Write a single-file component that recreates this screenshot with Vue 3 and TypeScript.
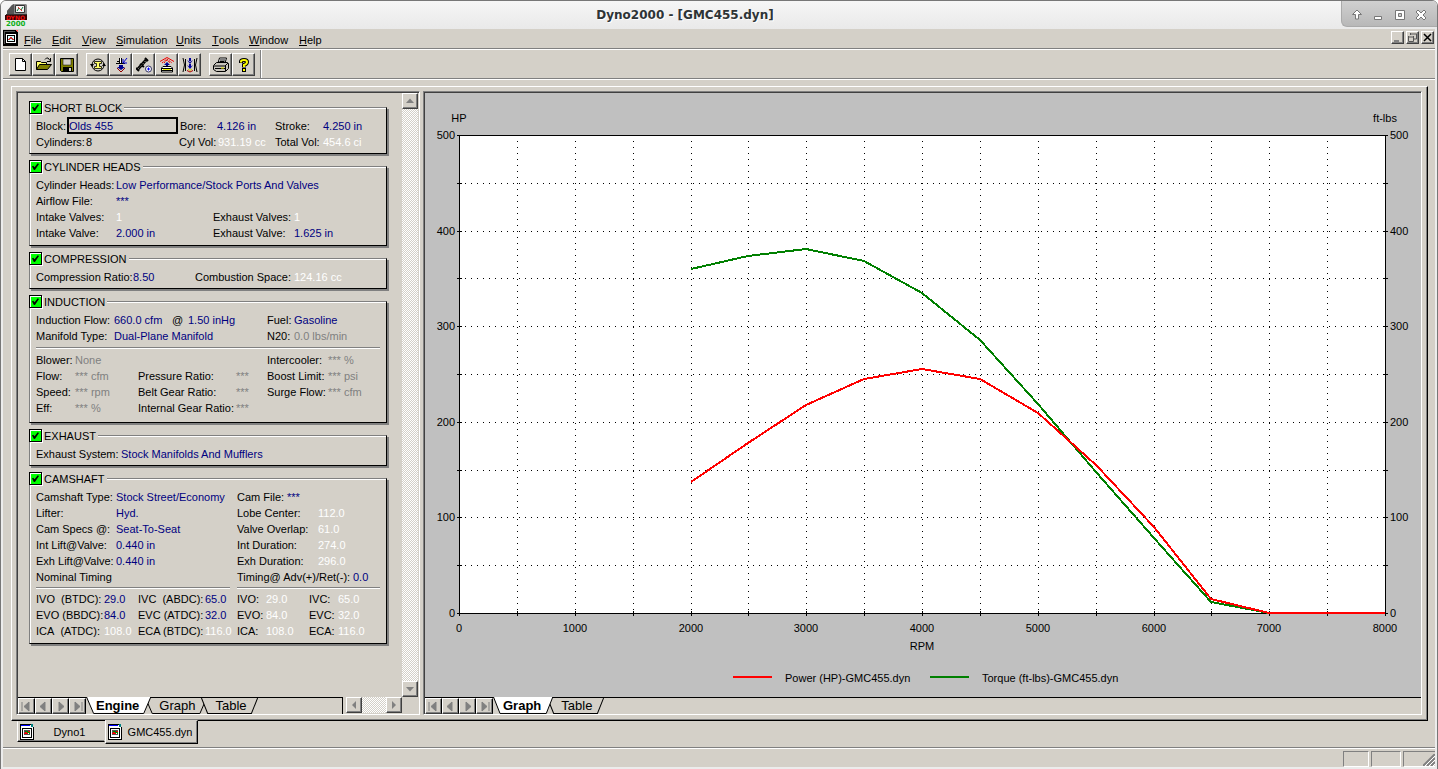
<script setup lang="ts">
import { computed, onBeforeUnmount, onMounted, ref } from 'vue'

type Tone = 'label' | 'edit' | 'calc' | 'off'
type Cell = [string, Tone?]
interface Row { grid: string; cells: Cell[] }
interface Group { id: string; title: string; blocks: Row[][]; split?: boolean; on: boolean }

const menus = ['File', 'Edit', 'View', 'Simulation', 'Units', 'Tools', 'Window', 'Help']

const groups = ref<Group[]>([
  {
    id: 'heads', title: 'CYLINDER HEADS', on: true,
    blocks: [[
      { grid: 'heads', cells: [['Cylinder Heads:'], ['Low Performance/Stock Ports And Valves', 'edit']] },
      { grid: 'heads', cells: [['Airflow File:'], ['***', 'edit']] },
      { grid: 'heads', cells: [['Intake Valves:'], ['1', 'calc'], ['Exhaust Valves:'], ['1', 'calc']] },
      { grid: 'heads', cells: [['Intake Valve:'], ['2.000 in', 'edit'], ['Exhaust Valve:'], ['1.625 in', 'edit']] },
    ]],
  },
  {
    id: 'compression', title: 'COMPRESSION', on: true,
    blocks: [[
      { grid: 'compression', cells: [['Compression Ratio:'], ['8.50', 'edit'], ['Combustion Space:'], ['124.16 cc', 'calc']] },
    ]],
  },
  {
    id: 'induction', title: 'INDUCTION', on: true,
    blocks: [
      [
        { grid: 'flow', cells: [['Induction Flow:'], ['660.0 cfm', 'edit'], ['@'], ['1.50 inHg', 'edit'], ['Fuel:'], ['Gasoline', 'edit']] },
        { grid: 'manifold', cells: [['Manifold Type:'], ['Dual-Plane Manifold', 'edit'], ['N20:'], ['0.0 lbs/min', 'off']] },
      ],
      [
        { grid: 'blower', cells: [['Blower:'], ['None', 'off'], [''], [''], ['Intercooler:'], ['*** %', 'off']] },
        { grid: 'blower', cells: [['Flow:'], ['*** cfm', 'off'], ['Pressure Ratio:'], ['***', 'off'], ['Boost Limit:'], ['*** psi', 'off']] },
        { grid: 'blower', cells: [['Speed:'], ['*** rpm', 'off'], ['Belt Gear Ratio:'], ['***', 'off'], ['Surge Flow:'], ['*** cfm', 'off']] },
        { grid: 'blower', cells: [['Eff:'], ['*** %', 'off'], ['Internal Gear Ratio:'], ['***', 'off']] },
      ],
    ],
  },
  {
    id: 'exhaust', title: 'EXHAUST', on: true,
    blocks: [[
      { grid: 'exhaust', cells: [['Exhaust System:'], ['Stock Manifolds And Mufflers', 'edit']] },
    ]],
  },
  {
    id: 'camshaft', title: 'CAMSHAFT', on: true, split: true,
    blocks: [
      [
        { grid: 'camfile', cells: [['Camshaft Type:'], ['Stock Street/Economy', 'edit'], ['Cam File:'], ['***', 'edit']] },
        { grid: 'cam', cells: [['Lifter:'], ['Hyd.', 'edit'], ['Lobe Center:'], ['112.0', 'calc']] },
        { grid: 'cam', cells: [['Cam Specs @:'], ['Seat-To-Seat', 'edit'], ['Valve Overlap:'], ['61.0', 'calc']] },
        { grid: 'cam', cells: [['Int Lift@Valve:'], ['0.440 in', 'edit'], ['Int Duration:'], ['274.0', 'calc']] },
        { grid: 'cam', cells: [['Exh Lift@Valve:'], ['0.440 in', 'edit'], ['Exh Duration:'], ['296.0', 'calc']] },
        { grid: 'advance', cells: [['Nominal Timing'], ['Timing@ Adv(+)/Ret(-):'], ['0.0', 'edit']] },
      ],
      [
        { grid: 'timing', cells: [['IVO\u00a0 (BTDC):'], ['29.0', 'edit'], ['IVC\u00a0 (ABDC):'], ['65.0', 'edit'], ['IVO:'], ['29.0', 'calc'], ['IVC:'], ['65.0', 'calc']] },
        { grid: 'timing', cells: [['EVO (BBDC):'], ['84.0', 'edit'], ['EVC (ATDC):'], ['32.0', 'edit'], ['EVO:'], ['84.0', 'calc'], ['EVC:'], ['32.0', 'calc']] },
        { grid: 'timing', cells: [['ICA\u00a0 (ATDC):'], ['108.0', 'calc'], ['ECA (BTDC):'], ['116.0', 'calc'], ['ICA:'], ['108.0', 'calc'], ['ECA:'], ['116.0', 'calc']] },
      ],
    ],
  },
])
const shortBlockOn = ref(true)
const block = ref('Olds 455')

const leftTabs = ['Engine', 'Graph', 'Table']
const rightTabs = ['Graph', 'Table']
const leftTab = ref('Engine')
const rightTab = ref('Graph')
const navs = ['First', 'Previous', 'Next', 'Last']
const navPaths = [
  'M3 3v9M10 3v9l-5-4.500z', 'M9 3v9l-5-4.500z', 'M6 3v9l5-4.500z', 'M5 3v9l5-4.500zM12 3v9',
]

/* chart */
const host = ref<HTMLElement | null>(null)
const size = ref({ w: 996, h: 604 })
let watcher: ResizeObserver | undefined
onMounted(() => {
  watcher = new ResizeObserver((entries) => {
    const box = entries[0].contentRect
    size.value = { w: Math.round(box.width), h: Math.round(box.height) }
  })
  if (host.value) watcher.observe(host.value)
})
onBeforeUnmount(() => watcher?.disconnect())

const area = computed(() => ({ l: 34, t: 42, r: size.value.w - 36, b: size.value.h - 84 }))
const px = (rpm: number) => Math.round(area.value.l + ((area.value.r - area.value.l) * rpm) / 8000)
const py = (v: number) => Math.round(area.value.b - ((area.value.b - area.value.t) * v) / 500)
const mid = computed(() => px(4000))
const rpmSteps = Array.from({ length: 17 }, (_, i) => i * 500)
const valueSteps = Array.from({ length: 11 }, (_, i) => i * 50)
const series = [
  { name: 'Torque (ft-lbs)-GMC455.dyn', color: '#008000', at: 8,
    data: [360, 373, 381, 368, 335, 286, 219, 148, 78, 12, 0] },
  { name: 'Power (HP)-GMC455.dyn', color: '#ff0000', at: -189,
    data: [137, 178, 218, 245, 255, 245, 209, 155, 90, 15, 0, 0, 0] },
]
const line = (data: number[]) => data.map((v, i) => `${px(2000 + i * 500)},${py(v)}`).join(' ')
</script>

<template>
  <div class="window">
    <header class="title">
      <svg class="app-icon" viewBox="0 0 24 24" aria-hidden="true">
        <path d="m2 8 5-6 3-1h11l1 1v10H2z" fill="#8a8a8a" />
        <path d="m2 8 5-6 2-1v10H2z" fill="#555" />
        <path d="M10.500 2.500h9v7h-9z" fill="#f4f4f4" stroke="#333" />
        <path d="m12 8 2-3 2 2 2-3" fill="none" stroke="#087a35" />
        <path d="m13 4 4 4" stroke="#e33" />
        <path d="M1 11h21v3H1z" fill="#333" />
        <path d="M0 12h22v5H0z" fill="#300" />
        <text x="1" y="17" class="logo-red">DYNO</text>
        <text x="1" y="23" class="logo-green">2000</text>
      </svg>
      <h1>Dyno2000 - [GMC455.dyn]</h1>
      <div class="wm">
        <button type="button" aria-label="Shade"><svg viewBox="0 0 14 14"><path d="m7 2 4.500 4.500H8.500V11h-3V6.500h-3z" /></svg></button>
        <button type="button" aria-label="Minimize"><svg viewBox="0 0 14 14"><path d="M3.500 8.500h7v3h-7z" /></svg></button>
        <button type="button" aria-label="Maximize"><svg viewBox="0 0 14 14"><path d="M2.500 2.500h9v9h-9z" /><path d="M5.500 5.500h3v3h-3z" fill="#ccc" /></svg></button>
        <button type="button" aria-label="Close"><svg viewBox="0 0 14 14"><path d="m2 4 2-2 3 3 3-3 2 2-3 3 3 3-2 2-3-3-3 3-2-2 3-3z" /></svg></button>
      </div>
    </header>

    <nav class="menubar">
      <svg class="doc-icon" viewBox="0 0 16 16" shape-rendering="crispEdges" aria-hidden="true">
        <path d="M0 0h15v16H0z" fill="#000" /><path d="M1 1h11v1H2v12H1z" fill="#555" />
        <path d="M3 4h10v9H3z" fill="#fff" /><path d="M4 5h8v7H4z" fill="#000" />
        <path d="M5 6h6v5H5z" fill="#dff" /><path d="M5 9.500h1v-1h1v-1h1v1h1v1h2" stroke="#c33" fill="none" />
        <path d="M12 0h3v3z" fill="#f66" />
      </svg>
      <button v-for="m in menus" :key="m" type="button" :class="'menu-' + m.toLowerCase()"><u>{{ m[0] }}</u>{{ m.slice(1) }}</button>
      <div class="mdi">
        <button type="button" aria-label="Minimize document"><svg viewBox="0 0 11 11"><path d="M2 9h5" stroke="#808080" stroke-width="2" /></svg></button>
        <button type="button" aria-label="Restore document"><svg viewBox="0 0 11 11"><path d="M3.500 1v2M3 2h7M9.500 2v5H7M1 5h6M1.500 4v5.500h5V4" fill="none" stroke="#555" /></svg></button>
        <button type="button" aria-label="Close document"><svg viewBox="0 0 11 11"><path d="m2 2 7 7M9 2 2 9" stroke="#000" stroke-width="1.500" /></svg></button>
      </div>
    </nav>

    <div class="toolbar">
      <div class="tools">
        <button type="button" aria-label="New"><svg viewBox="0 0 16 16"><path d="M2.500 1.500h7l3 3v9h-10z" fill="#fff" stroke="#000" /><path d="M9.500 1.500v3h3" fill="none" stroke="#000" /></svg></button>
        <button type="button" aria-label="Open"><svg viewBox="0 0 16 16">
          <path d="M.5 12.500v-8h4l1 1h5v3" fill="#ffff66" stroke="#000" /><path d="m.5 12.500 3-5h12l-4 5z" fill="#808000" stroke="#000" />
          <path d="M9 2.500 10.500 1H12l2 2.500M14.500 1v3.500H11" fill="none" stroke="#000" /></svg></button>
        <button type="button" aria-label="Save"><svg viewBox="0 0 16 16">
          <path d="M1.500 1.500h13v13h-12l-1-1z" fill="#808000" stroke="#000" /><path d="M4 2h8v6H4z" fill="#d4d0c8" stroke="#000" stroke-width=".5" />
          <path d="M4 10h9v4.500H4z" /><path d="M10 11h2v3h-2z" fill="#d4d0c8" /></svg></button>
      </div>
      <div class="tools">
        <button type="button" aria-label="Short block"><svg viewBox="0 0 16 16">
          <circle cx="8" cy="8" r="6" fill="none" stroke="#000" stroke-width="1" /><path d="M4.500 4.500h7v2h-2v3h2v2h-7v-2h2v-3h-2z" fill="#ffff66" stroke="#000" stroke-width=".8" />
          <path d="M0 7h4L2 10zM12 9h4l-2-3z" /></svg></button>
        <button type="button" aria-label="Induction"><svg viewBox="0 0 16 16">
          <path d="M6.500 1v5M8.500 1v5M3 6.500h9M4 4.500h3" fill="none" stroke="#000" /><path d="M7 1h1v5H7z" fill="#fff" /><path d="m14 1-4 5M10 2v4h4" fill="none" stroke="#00c" />
          <path d="M6 8h4v2h2l-4 3-4-3h2z" fill="#000090" /><path d="m4 11 4 4 4-4" fill="none" stroke="#900000" /></svg></button>
        <button type="button" aria-label="Camshaft"><svg viewBox="0 0 16 16">
          <path d="m2 12 8-9" stroke="#000" stroke-width="3" /><path d="m0 11 3 3M4 7l4 3M9 1l3 3" stroke="#000" stroke-width="2" /><path d="m2.500 11.500 7.500-8" stroke="#ddc" stroke-dasharray="1 2" />
          <circle cx="12.500" cy="12" r="3" fill="#fff" stroke="#336" /><path d="M11 12h3M12.500 10.500v3" stroke="#00f" /></svg></button>
        <button type="button" aria-label="Cylinder heads"><svg viewBox="0 0 16 16">
          <path d="m1 4.500 7-4 7 4" fill="none" stroke="#e00" /><path d="m3 6 5-4 5 4M5 6l3-3 3 3" fill="none" stroke="#e00" stroke-dasharray="2 1" />
          <path d="M7 10V8H5l3-3 3 3H9v2z" fill="#000090" /><path d="M2.500 11 4 9.500h8l1.500 1.500v4h-11z" fill="#fff" stroke="#000" /><path d="M3 11.500h10M3 13.500h10" stroke="#000" /><path d="M4 12.500h8" stroke="#ee0" /></svg></button>
        <button type="button" aria-label="Exhaust"><svg viewBox="0 0 16 16">
          <path d="M1 1q3 7 0 14M15 1q-3 7 0 14M3.500 2v12M12.500 2v12" fill="none" stroke="#000" /><path d="M8 1v3M8 7v3" stroke="#0000a0" stroke-width="2" />
          <path d="m5 3 3 2 3-2-3 4zM5 8l3 2 3-2-3 4z" fill="#0000a0" /><path d="m6 12 2 1.500 2-1.500" fill="none" stroke="#cc0" /><path d="m5 13.500 3 1.500 3-1.500" fill="none" stroke="#a00" /></svg></button>
      </div>
      <div class="tools">
        <button type="button" aria-label="Print"><svg viewBox="0 0 16 16">
          <path d="m5 6 1.500-5h7L12 6z" fill="#fff" stroke="#000" /><path d="M7 3h5M6.500 4.500h5" stroke="#000" /><path d="m.5 8.500 3-3h11l1 1v5l-3 3h-9l-3-2z" fill="#c8c4bc" stroke="#000" />
          <path d="M1 9h11.500v5M12 9l3-3M2 11.500h10" fill="none" stroke="#000" /><path d="M8 11h3" stroke="#ee0" /></svg></button>
        <button type="button" aria-label="Help"><svg viewBox="0 0 16 16">
          <path d="M5 6V4.500Q5 3 8 3t3 2-3 3v2.500" fill="none" stroke="#000" stroke-width="4" /><path d="M6 11h4v4H6z" />
          <path d="M5 5.500v-1Q5 3 8 3t3 2-3 3v2" fill="none" stroke="#ffff00" stroke-width="2" /><path d="M7 12h2v2H7z" fill="#ffff00" /></svg></button>
      </div>
    </div>

    <main class="workspace">
      <div class="document">
        <section class="pane engine-pane">
          <div class="pane-body">
            <form class="sheet" @submit.prevent>
              <section class="group short">
                <label class="caption"><input v-model="shortBlockOn" type="checkbox" />SHORT BLOCK</label>
                <div class="row grid-block">
                  <label for="block">Block:</label>
                  <input id="block" v-model="block" class="field" type="text" />
                  <span>Bore:</span><span class="edit">4.126 in</span><span>Stroke:</span><span class="edit">4.250 in</span>
                </div>
                <div class="row grid-cylinders">
                  <span>Cylinders:</span><span>8</span><span>Cyl Vol:</span><span class="calc">931.19 cc</span><span>Total Vol:</span><span class="calc">454.6 ci</span>
                </div>
              </section>
              <section v-for="g in groups" :key="g.id" class="group" :class="g.id">
                <label class="caption"><input v-model="g.on" type="checkbox" />{{ g.title }}</label>
                <template v-for="(rows, b) in g.blocks" :key="b">
                  <div v-if="b" class="rules"><hr /><hr v-if="g.split" /></div>
                  <div v-for="(r, i) in rows" :key="i" class="row" :class="'grid-' + r.grid">
                    <span v-for="(c, k) in r.cells" :key="k" :class="c[1]">{{ c[0] }}</span>
                  </div>
                </template>
              </section>
            </form>
            <div class="vscroll">
              <button type="button" aria-label="Scroll up"><svg viewBox="0 0 12 12"><path d="M6 3.500 10 8H2z" /></svg></button>
              <button type="button" aria-label="Scroll down"><svg viewBox="0 0 12 12"><path d="M2 4h8L6 8.500z" /></svg></button>
            </div>
          </div>
          <div class="strip">
            <div class="tabs">
              <button v-for="(n, i) in navs" :key="n" type="button" class="nav" :aria-label="n + ' sheet'"><svg viewBox="0 0 15 15"><path :d="navPaths[i]" /></svg></button>
              <button v-for="t in leftTabs" :key="t" type="button" class="tab" :class="{ active: t === leftTab }" @click="leftTab = t">
                <svg viewBox="0 0 60 16" preserveAspectRatio="none" aria-hidden="true"><path d="M.5 0 7 15.500h46L59.500 0" /></svg><span>{{ t }}</span>
              </button>
            </div>
            <div class="hscroll">
              <button type="button" aria-label="Scroll left"><svg viewBox="0 0 12 12"><path d="M8 2v8L4 6z" /></svg></button>
              <button type="button" aria-label="Scroll right"><svg viewBox="0 0 12 12"><path d="M4 2v8l4-4z" /></svg></button>
            </div>
          </div>
        </section>

        <section class="pane graph-pane">
          <div ref="host" class="pane-body chart">
            <svg :width="size.w" :height="size.h" role="img" aria-label="Power and torque against RPM">
              <rect :x="area.l" :y="area.t" :width="area.r - area.l" :height="area.b - area.t" fill="#fff" />
              <g class="crisp">
                <line v-for="r in rpmSteps.slice(1, -1)" :key="'v' + r" class="dots" :x1="px(r) + 0.5" :x2="px(r) + 0.5" :y1="area.t" :y2="area.b" />
                <line v-for="v in valueSteps.slice(1, -1)" :key="'h' + v" class="dots" :x1="area.l" :x2="area.r" :y1="py(v) + 0.5" :y2="py(v) + 0.5" />
                <rect class="axis" :x="area.l + 0.5" :y="area.t + 0.5" :width="area.r - area.l" :height="area.b - area.t" />
                <line v-for="r in rpmSteps" :key="'t' + r" class="axis" :x1="px(r) + 0.5" :x2="px(r) + 0.5" :y1="area.b - 2" :y2="area.b + 3" />
                <g v-for="v in valueSteps" :key="'u' + v">
                  <line class="axis" :x1="area.l - 2" :x2="area.l + 3" :y1="py(v) + 0.5" :y2="py(v) + 0.5" />
                  <line class="axis" :x1="area.r - 2" :x2="area.r + 3" :y1="py(v) + 0.5" :y2="py(v) + 0.5" />
                </g>
                <polyline v-for="s in series" :key="s.name" class="curve" :points="line(s.data)" :stroke="s.color" />
                <line v-for="s in series" :key="'k' + s.name" class="curve" :stroke="s.color" :x1="mid + s.at" :x2="mid + s.at + 39" :y1="area.b + 64" :y2="area.b + 64" />
              </g>
              <g v-for="v in valueSteps.filter((n) => n % 100 === 0)" :key="'l' + v">
                <text :x="area.l - 4" :y="py(v) + 4" text-anchor="end">{{ v }}</text>
                <text :x="area.r + 5" :y="py(v) + 4">{{ v }}</text>
              </g>
              <text v-for="r in rpmSteps.filter((n) => n % 1000 === 0)" :key="'x' + r" :x="px(r)" :y="area.b + 19" text-anchor="middle">{{ r }}</text>
              <text :x="area.l" :y="area.t - 13" text-anchor="middle">HP</text>
              <text :x="area.r" :y="area.t - 13" text-anchor="middle">ft-lbs</text>
              <text :x="mid" :y="area.b + 37" text-anchor="middle">RPM</text>
              <text v-for="s in series" :key="'n' + s.name" :x="mid + s.at + 52" :y="area.b + 69">{{ s.name }}</text>
            </svg>
          </div>
          <div class="strip">
            <div class="tabs">
              <button v-for="(n, i) in navs" :key="n" type="button" class="nav" :aria-label="n + ' sheet'"><svg viewBox="0 0 15 15"><path :d="navPaths[i]" /></svg></button>
              <button v-for="t in rightTabs" :key="t" type="button" class="tab" :class="{ active: t === rightTab }" @click="rightTab = t">
                <svg viewBox="0 0 60 16" preserveAspectRatio="none" aria-hidden="true"><path d="M.5 0 7 15.500h46L59.500 0" /></svg><span>{{ t }}</span>
              </button>
            </div>
          </div>
        </section>
      </div>

      <div class="files">
        <button v-for="f in ['Dyno1', 'GMC455.dyn']" :key="f" type="button" class="file" :class="{ current: f !== 'Dyno1' }">
          <svg viewBox="0 0 16 16" shape-rendering="crispEdges" aria-hidden="true">
            <path d="M1 1h11l2 2v12H1z" fill="#fff" /><path d="M1.500 15V.5h11M14.500 3v12.500H1" fill="none" stroke="#000" /><path d="M12 0h2v3h-2z" fill="#008080" />
            <path d="M2 1h9v1H2z" fill="#00f" /><path d="M3.500 4.500h9v9h-9z" fill="#fff" stroke="#000" /><path d="M5.500 6.500h5v4h-5z" fill="#fff" stroke="#555" />
            <path d="M5 10V9h1V8h1v1h1V8h1V7h2" fill="none" stroke="#e00" /><path d="M6 7h2v1h2v2" fill="none" stroke="#080" />
          </svg>
          <span>{{ f }}</span>
        </button>
      </div>
    </main>

    <footer class="status">
      <span class="cell" /><span class="cell wide" />
      <span class="cell last"><svg viewBox="0 0 12 12"><path d="M0 12 12 0M4 12l8-8M8 12l4-4" stroke="#808080" stroke-width="2" /><path d="M2 12 12 2M6 12l6-6M10 12l2-2" stroke="#fff" /></svg></span>
    </footer>
  </div>
</template>

<style>
html, body { background: #fff; }
</style>

<style scoped>
.window, .window * { box-sizing: border-box; }
.window {
  min-height: 100vh;
  display: flex;
  flex-direction: column;
  background: #d4d0c8;
  border: 1px solid #777;
  border-radius: 6px 6px 0 0;
  box-shadow: inset 2px 0 #ececec, inset -2px -2px #ececec;
  padding: 0 2px 2px;
  overflow: hidden;
  font: 11px/16px "Liberation Sans", Arial, sans-serif;
  color: #000;
}
button { font: inherit; color: inherit; padding: 0; margin: 0; border: 0; background: none; display: flex; align-items: center; justify-content: center; }
svg { display: block; }

.title { height: 28px; margin: 0 -2px; display: flex; align-items: flex-start; background: linear-gradient(#f6f6f6, #e9e9e9); flex: none; }
.app-icon { width: 24px; height: 24px; margin: 2px 0 0 4px; overflow: visible; }
.app-icon text { font: bold 7px "DejaVu Sans", sans-serif; }
.app-icon .logo-red { fill: #f01010; font-size: 6px; }
.logo-green { fill: #10b020; }
h1 { flex: 1; text-align: center; margin: 0; font: bold 12px/28px "DejaVu Sans", sans-serif; color: #2e3436; text-shadow: 1px 1px #fff; }
.wm { width: 96px; height: 26px; padding: 0 5px 0 4px; display: flex; justify-content: space-around; background: linear-gradient(#d0d0d0, #b8b8b8); border: 1px solid #aaa; border-width: 0 0 1px 1px; border-bottom-left-radius: 6px; }
.wm button { width: 20px; height: 28px; }
.wm svg { width: 14px; height: 14px; fill: #fff; stroke: #777; }

.menubar { height: 21px; display: flex; align-items: flex-start; border-bottom: 1px solid #fff; box-shadow: inset 0 -1px #808080; flex: none; }
.doc-icon { width: 16px; height: 16px; margin-top: 1px; margin-right: 5px; }
.menubar > button { height: 21px; justify-content: flex-start; }
.menu-file { width: 28px; }
.menu-edit { width: 30px; }
.menu-view { width: 34px; }
.menu-simulation { width: 60px; }
.menu-units { width: 36px; }
.menu-tools { width: 37px; }
.menu-window { width: 50px; }
.menu-help { width: 40px; }
.mdi { margin-left: auto; margin-top: 2px; margin-right: 1px; display: flex; gap: 2px; }
.mdi button, .tools button, .nav, .vscroll button, .hscroll button {
  background: #d4d0c8; border: 1px solid; border-color: #fff #404040 #404040 #fff; box-shadow: inset -1px -1px #808080; flex: none;
}
.mdi button { width: 13px; height: 13px; }
.mdi svg { width: 11px; height: 11px; }

.toolbar { height: 30px; display: flex; gap: 8px; align-items: flex-start; padding-left: 6px; border-bottom: 1px solid #fff; box-shadow: inset 0 -1px #808080; flex: none; }
.tools { display: flex; padding-top: 3px; }
.tools:last-child { height: 28px; padding-right: 6px; border-right: 1px solid #fff; box-shadow: inset -1px 0 #808080; }
.tools button { width: 23px; height: 23px; }
.tools svg { width: 16px; height: 16px; }

.workspace { flex: 1; display: flex; flex-direction: column; padding-top: 6px; border-bottom: 1px solid #808080; }
.document { flex: 1; display: flex; gap: 3px; margin: 0 7px 0 8px; padding: 4px 5px 5px 4px; border: 1px solid; border-color: #fff #000 #000 #fff; box-shadow: inset -1px -1px #808080; }
.pane { display: flex; flex-direction: column; border: 1px solid; border-color: #808080 #fff #fff #808080; box-shadow: inset 1px 1px #404040; padding: 1px 0 0 1px; }
.engine-pane { flex: 0 0 404px; }
.graph-pane { flex: 1; min-width: 0; }
.pane-body { flex: 1; display: flex; min-height: 0; }

.sheet { flex: 1; display: flex; flex-direction: column; gap: 12px; padding: 14px 15px 49px 11px; }
.group { border: 1px solid; border-color: #808080 #000 #000 #808080; box-shadow: inset 1px 1px #fff, 2px 2px #808080; padding: 0 0 3px 6px; }
.heads, .camshaft { padding-bottom: 4px; }
.induction { padding-bottom: 6px; }
.caption { display: flex; align-items: center; width: max-content; height: 13px; margin: -7px 0 4px -7px; padding-right: 2px; background: #d4d0c8; }
.caption input { appearance: none; width: 13px; height: 13px; margin: 0 2px 0 0; border: 1px solid #000; background: #00ff00; box-shadow: inset 1px 1px #fff, 1px 1px #fff; }
.caption input:checked::before { content: ""; display: block; width: 7px; height: 7px; margin: 2px; background: #000; clip-path: polygon(0 48%, 18% 40%, 36% 62%, 82% 4%, 100% 14%, 42% 100%, 24% 98%); }
.row { display: grid; height: 16px; white-space: nowrap; }
.row > * { min-width: 0; }
.grid-block { grid-template-columns: 31px 113px 37px 58px 48px 1fr; }
.grid-cylinders { grid-template-columns: 50px 93px 39px 57px 48px 1fr; }
.grid-heads { grid-template-columns: 80px 97px 81px 1fr; }
.grid-compression { grid-template-columns: 97px 62px 99px 1fr; }
.grid-flow { grid-template-columns: 78px 58px 16px 79px 27px 1fr; }
.grid-manifold { grid-template-columns: 78px 153px 27px 1fr; }
.grid-blower { grid-template-columns: 39px 63px 98px 31px 61px 1fr; }
.grid-exhaust { grid-template-columns: 85px 1fr; }
.grid-camfile { grid-template-columns: 80px 121px 50px 1fr; }
.grid-cam { grid-template-columns: 80px 121px 81px 1fr; }
.grid-advance { grid-template-columns: 201px 116px 1fr; }
.grid-timing { grid-template-columns: 68px 34px 67px 32px 29px 43px 29px 1fr; }
.edit { color: #000080; }
.calc { color: #fff; }
.off { color: #808080; }
.field { width: 111px; height: 17px; margin: -1px 0 0; padding: 0; border: 2px solid #000; border-radius: 0; background: #d4d0c8; color: #000080; font: inherit; line-height: 13px; outline: 0; }
.rules { display: grid; gap: 7px; grid-auto-flow: column; padding-right: 6px; margin: 3px 0; }
.camshaft .rules { grid-template-columns: 194px 1fr; margin: 2px 0; }
hr { width: 100%; height: 2px; margin: 0; border: 0; background: #fff; border-top: 1px solid #808080; }

.vscroll, .hscroll { display: flex; justify-content: space-between; background: repeating-conic-gradient(#fff 0 25%, #d4d0c8 0 50%) 0 0 / 2px 2px; flex: none; }
.vscroll { flex-direction: column; width: 16px; margin-right: 1px; }
.hscroll { width: 56px; margin-right: 17px; height: 16px; }
.vscroll button, .hscroll button { width: 16px; height: 16px; }
.vscroll svg, .hscroll svg { width: 12px; height: 12px; fill: #808080; }

.strip { display: flex; height: 17px; flex: none; }
.tabs { flex: 1; display: flex; border-top: 1px solid #000; }
.engine-pane .tabs { border-right: 1px solid #000; margin-right: 3px; }
.nav { width: 17px; height: 16px; border-right-color: #000; }
.nav svg { width: 15px; height: 15px; fill: #808080; stroke: #808080; }
.nav path { stroke-width: 1; }
.tab { position: relative; height: 16px; padding: 0 12px 0 14px; margin-left: -6px; font-size: 13px; }
.nav + .tab { margin-left: 0; padding: 0 12px 0 10px; }
.tab svg { position: absolute; inset: 0; width: 100%; height: 100%; fill: #d4d0c8; stroke: #000; }
.tab path { vector-effect: non-scaling-stroke; }
.tab span { position: relative; }
.tab.active { z-index: 1; font-weight: bold; height: 17px; margin-top: -1px; }
.tab.active svg { fill: #fff; }

.chart { background: #c0c0c0; min-width: 0; overflow: hidden; }
.chart svg { flex: none; }
.chart text { fill: #000; }
.crisp { shape-rendering: crispEdges; }
.dots { stroke: #000; stroke-dasharray: 1 5; }
.axis { fill: none; stroke: #000; }
.curve { fill: none; stroke-width: 2; }

.files { display: flex; align-items: flex-start; height: 26px; margin-left: 14px; flex: none; }
.file { height: 21px; width: 88px; padding-left: 1px; justify-content: flex-start; background: #d4d0c8; border: 1px solid; border-color: transparent #d4d0c8 #000 #fff; box-shadow: inset 0 -1px #808080; }
.file svg { width: 16px; height: 16px; flex: none; }
.file span { flex: 1; text-align: center; }
.file.current { position: relative; width: 93px; height: 24px; margin-top: -1px; border-color: #d4d0c8 #000 #000 #fff; box-shadow: inset -1px -1px #808080; }

.status { height: 19px; display: flex; justify-content: flex-end; gap: 2px; padding-top: 2px; border-top: 1px solid #fff; flex: none; }
.cell { width: 26px; height: 16px; border: 1px solid; border-color: #808080 #fff #fff #808080; }
.cell.wide { width: 30px; }
.cell.last { width: 32px; border-right: 0; display: flex; justify-content: flex-end; align-items: flex-end; }
.cell svg { width: 12px; height: 12px; }
</style>
